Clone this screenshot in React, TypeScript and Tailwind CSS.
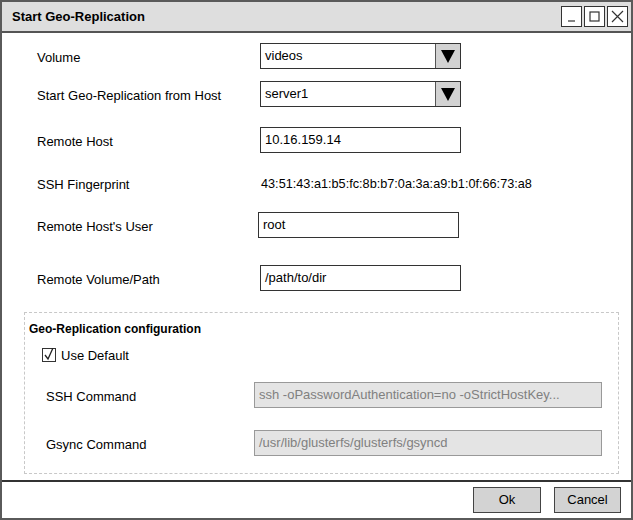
const font = { fontFamily: '"Liberation Sans", Arial, sans-serif' };

const Select = ({ value }: { value: string }) => (
    <div className="flex h-[26px] w-[201px] border-[1.5px] border-[#333] bg-white">
        <div className="flex flex-1 items-center px-[4px] text-[13px]">{value}</div>
        <div className="flex w-[25px] items-center justify-center border-l-[1.5px] border-[#555] bg-[#d2d2d2]">
            <svg width="16" height="16" viewBox="0 0 16 16">
                <path d="M1 2 L15 2 L8 15 Z" fill="#000" />
            </svg>
        </div>
    </div>
);

const Input = ({ value }: { value: string }) => (
    <div className="flex h-[26px] w-[201px] items-center border-[1.5px] border-[#333] bg-white px-[4px] text-[13px]">
        {value}
    </div>
);

const DisabledInput = ({ value }: { value: string }) => (
    <div className="flex h-[26px] w-[348px] items-center border border-[#999] bg-[#e4e4e4] px-[4px] text-[13px] text-[#808080]">
        {value}
    </div>
);

const Row = ({ label, children, className }: { label: string; children: React.ReactNode; className: string }) => (
    <div className={`flex h-[26px] items-center ${className}`}>
        <div className="w-[223px] pt-[4px] text-[13px]">{label}</div>
        {children}
    </div>
);

const WinButton = ({ children }: { children: React.ReactNode }) => (
    <div className="flex h-[21px] w-[21px] items-center justify-center border border-[#333] bg-white">
        <svg width="15" height="15" viewBox="0 0 15 15" fill="none" stroke="#333" strokeWidth="1.2">
            {children}
        </svg>
    </div>
);

export default function App() {
    return (
        <div className="h-[520px] w-[633px] bg-white text-black" style={font}>
            <div className="flex h-full flex-col border-2 border-[#5a5a5a]">
                {/* title bar */}
                <div className="flex h-[31px] items-center justify-between border-b-2 border-[#555] bg-[#dedede] pl-[10px] pr-[3px]">
                    <span className="text-[13px] font-bold">Start Geo-Replication</span>
                    <div className="flex gap-[2px]">
                        <WinButton>
                            <path d="M4 12 L11 12" />
                        </WinButton>
                        <WinButton>
                            <rect x="3" y="3" width="9" height="9" />
                        </WinButton>
                        <WinButton>
                            <path d="M2 2 L13 13 M13 2 L2 13" />
                        </WinButton>
                    </div>
                </div>

                {/* body */}
                <div className="flex flex-1 flex-col pl-[35px]">
                    <Row label="Volume" className="mt-[10px]">
                        <Select value="videos" />
                    </Row>
                    <Row label="Start Geo-Replication from Host" className="mt-[12px]">
                        <Select value="server1" />
                    </Row>
                    <Row label="Remote Host" className="mt-[20px]">
                        <Input value="10.16.159.14" />
                    </Row>
                    <Row label="SSH Fingerprint" className="mt-[17px]">
                        <span className="pl-[1px] pt-[4px] text-[12.7px]">43:51:43:a1:b5:fc:8b:b7:0a:3a:a9:b1:0f:66:73:a8</span>
                    </Row>
                    <Row label="Remote Host's User" className="mt-[16px]">
                        <div className="-ml-[2px]">
                            <Input value="root" />
                        </div>
                    </Row>
                    <Row label="Remote Volume/Path" className="mt-[27px]">
                        <Input value="/path/to/dir" />
                    </Row>

                    {/* group */}
                    <div className="-ml-[13px] mt-[21px] flex h-[162px] w-[595px] flex-col border border-dashed border-[#c8c8c8]">
                        <div className="mt-[6px] flex h-[20px] items-center pl-[4px] text-[12px] font-bold">
                            Geo-Replication configuration
                        </div>
                        <div className="mt-[7px] flex h-[18px] items-center pl-[17px]">
                            <div className="flex h-[14px] w-[14px] items-center justify-center border border-[#333]">
                                <svg width="12" height="14" viewBox="0 0 12 14" fill="none" stroke="#222" strokeWidth="1.3">
                                    <path d="M2 7 L5 11 L10 0" />
                                </svg>
                            </div>
                            <span className="ml-[5px] pt-[1px] text-[13px]">Use Default</span>
                        </div>
                        <div className="mt-[18px] flex h-[26px] items-center pl-[21px]">
                            <div className="w-[208px] pt-[4px] text-[13px]">SSH Command</div>
                            <DisabledInput value="ssh -oPasswordAuthentication=no -oStrictHostKey..." />
                        </div>
                        <div className="mt-[22px] flex h-[26px] items-center pl-[21px]">
                            <div className="w-[208px] pt-[4px] text-[13px]">Gsync Command</div>
                            <DisabledInput value="/usr/lib/glusterfs/glusterfs/gsyncd" />
                        </div>
                    </div>
                </div>

                {/* footer */}
                <div className="flex h-[38px] items-center justify-end gap-[13px] border-t-2 border-[#333] pr-[10px]">
                    <button className="h-[26px] w-[68px] border-[1.5px] border-[#444] bg-[#d3d3d3] text-[13px]">Ok</button>
                    <button className="h-[26px] w-[67px] border-[1.5px] border-[#444] bg-[#d3d3d3] text-[13px]">Cancel</button>
                </div>
            </div>
        </div>
    );
}
